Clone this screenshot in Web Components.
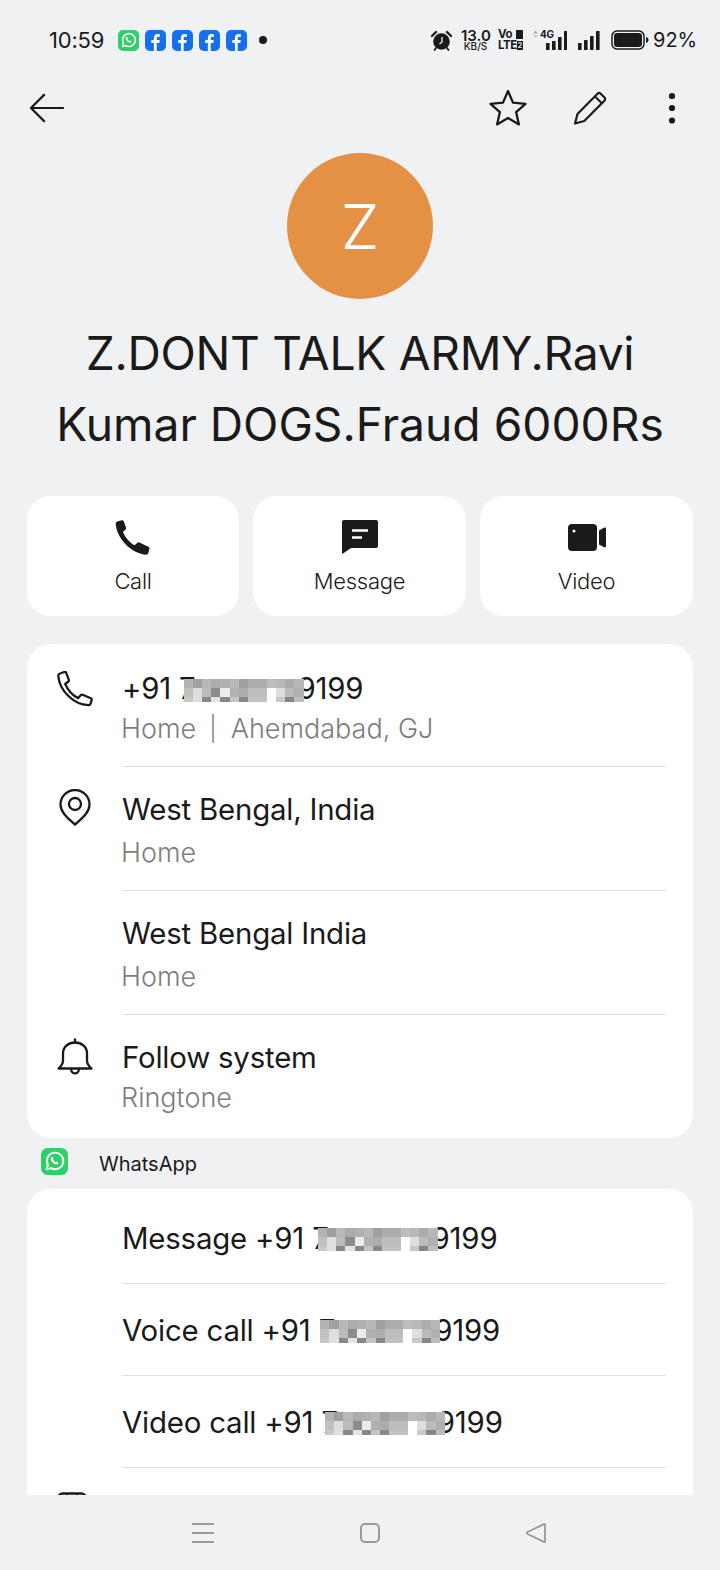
<!DOCTYPE html>
<html>
<head>
<meta charset="utf-8">
<title>Contact</title>
<style>
    html, body { margin: 0; padding: 0; background: #f0f1f3; }
    body { font-family: Inter, "Noto Sans", sans-serif; color: #1a1a1a; }
</style>
</head>
<body>
<contact-screen>
    <status-bar></status-bar>
    <contact-toolbar></contact-toolbar>
    <contact-scroll>
        <contact-header letter="Z"><span style="letter-spacing:-.3px">Z.DONT TALK ARMY.Ravi</span><br>Kumar DOGS.Fraud 6000Rs</contact-header>
        <action-row></action-row>
        <info-card>
            <info-row icon="phone" icon-top="27" height="123" sub="Home<span style='margin:0 14px 0 13px;font-size:24px;position:relative;top:-1px'>|</span>Ahemdabad, GJ" pad="23" gap="14"><span>+91 7</span><pixel-block style="margin-left:-12px;margin-right:-6px"></pixel-block><span>9199</span></info-row>
            <info-row icon="pin" icon-top="22" sub="Home" pad="21" gap="17">West Bengal, India</info-row>
            <info-row sub="Home" pad="21" gap="17">West Bengal India</info-row>
            <info-row icon="bell" icon-top="23" height="123" sub="Ringtone" pad="21" gap="14" last>Follow system</info-row>
        </info-card>
        <app-label>WhatsApp</app-label>
        <info-card>
            <action-line first>Message +91 <span>7</span><pixel-block style="margin-left:-11px;margin-right:-6px"></pixel-block><span>9199</span></action-line>
            <action-line>Voice call +91 <span>7</span><pixel-block style="margin-left:-15px;margin-right:-6px"></pixel-block><span>9199</span></action-line>
            <action-line>Video call +91 <span>7</span><pixel-block style="margin-left:-13px;margin-right:-8px"></pixel-block><span>9199</span></action-line>
            <action-line cut></action-line>
        </info-card>
    </contact-scroll>
    <nav-bar></nav-bar>
</contact-screen>

<script>
const ICONS = {
    whatsapp: `<svg viewBox="0 0 21 21" width="21" height="21"><rect width="21" height="21" rx="5" fill="#2fd06a"/><path d="M4.400 16.600l1-3.400a6.400 6.400 0 1 1 2.400 2.400z" fill="none" stroke="#fff" stroke-width="1.500" stroke-linejoin="round"/><path d="M8.200 7.200c.4-.4 1-.4 1.200.1l.4.9-.5.7c.5 1 1.200 1.700 2.200 2.200l.7-.6 1 .5c.4.200.4.800 0 1.200-.7.700-1.700.600-2.900 0-1-.6-1.800-1.400-2.300-2.500-.5-1-.5-1.900.2-2.500z" fill="#fff"/></svg>`,
    facebook: `<svg viewBox="0 0 21 21" width="21" height="21"><rect width="21" height="21" rx="5" fill="#1570f0"/><path d="M11.700 21v-8h2.600l.4-3h-3V8.400c0-.9.300-1.400 1.500-1.400h1.600V4.300c-.5-.1-1.300-.2-2.200-.2-2.300 0-3.700 1.300-3.700 3.800V10H6.300v3h2.600v8z" fill="#fff"/></svg>`,
    alarm: `<svg viewBox="0 0 21 21" width="21" height="21"><circle cx="10.500" cy="11.500" r="8.300" fill="#1a1a1a"/><path d="M1 6l4-4M20 6l-4-4" stroke="#1a1a1a" stroke-width="2.400" stroke-linecap="round"/><path d="M5 18l-1.500 2M16 18l1.500 2" stroke="#1a1a1a" stroke-width="1.800" stroke-linecap="round"/><path d="M11 7v5l-2.500 2" fill="none" stroke="#f0f1f3" stroke-width="1.300"/></svg>`,
    back: `<svg viewBox="0 0 36 30" width="35" height="30"><path d="M35 15H2M15.500 1.500L2 15l13.500 13.500" fill="none" stroke="#1a1a1a" stroke-width="2.300" stroke-linecap="round" stroke-linejoin="round"/></svg>`,
    star: `<svg viewBox="0 0 38 38" width="38" height="38"><path d="M19 2l5 11.600 12.500 1.200-9.400 8.300 2.800 12.300L19 29l-10.900 6.400 2.800-12.300-9.400-8.300L14 13.600z" fill="none" stroke="#1a1a1a" stroke-width="2.300" stroke-linejoin="round"/></svg>`,
    pencil: `<svg viewBox="0 0 34 34" width="34" height="34"><path d="M2 32.500l2.500-9.500L24.500 2.800c1-1 2.300-1 3.200-.1l3.800 3.800c.9.900.9 2.200-.1 3.200L11.300 30z" fill="none" stroke="#1a1a1a" stroke-width="2.200" stroke-linejoin="round"/><path d="M22 5.500l6.800 6.800" fill="none" stroke="#1a1a1a" stroke-width="2"/></svg>`,
    more: `<svg viewBox="0 0 8 32" width="8" height="32"><circle cx="4" cy="4" r="3.100" fill="#1a1a1a"/><circle cx="4" cy="16" r="3.100" fill="#1a1a1a"/><circle cx="4" cy="28.500" r="3.100" fill="#1a1a1a"/></svg>`,
    callFill: `<svg viewBox="0 0 36 35" width="36" height="35"><path d="M3 1.200l3.700-1c1-.2 1.700.2 2 1.100l2.300 6.200c.3.800.1 1.400-.5 2L8 12c1.800 5 6.700 10.800 11.500 13.300l3-2.500c.7-.6 1.300-.7 2-.3l8.800 4.300c1 .5 1.300 1.100 1.100 2l-1 4c-.3 1.300-1.300 2-2.600 1.900C15.500 33.500 1.800 18 0.700 4.100.6 2.600 1.500 1.600 3 1.200z" fill="#1a1a1a"/></svg>`,
    msgFill: `<svg viewBox="0 0 36 34" width="36" height="34"><path d="M2 0h32c1.200 0 2 .8 2 2v24c0 1.200-.8 2-2 2H9l-8 5.600c-.5.300-1 0-1-.5V2C0 .8.800 0 2 0z" fill="#1a1a1a"/><path d="M10 10.500h16M10 17.500h10" stroke="#fff" stroke-width="2.600" stroke-linecap="butt"/></svg>`,
    videoFill: `<svg viewBox="0 0 38 27" width="38" height="27"><rect width="29" height="27" rx="4" fill="#1a1a1a"/><circle cx="6" cy="7" r="1.500" fill="#fff"/><path d="M31 6.500l5-2.800c.8-.4 2 0 2 1v17.600c0 1-1.200 1.400-2 1l-5-2.800z" fill="#1a1a1a"/></svg>`,
    phone: `<svg viewBox="0 0 36 36" width="36" height="36"><path d="M3 2.500L7.400 1c.8-.3 1.500 0 1.800.8l2.700 7c.2.700 0 1.300-.5 1.700l-3.200 2.500c2.300 5.400 7.500 11.500 13 14.100l2.700-3c.5-.5 1.100-.7 1.800-.4l8 3.500c.8.300 1.100 1 .9 1.800l-1 3.600c-.3 1.100-1.200 1.700-2.300 1.600C16.400 33.500 2.500 19.500 1.300 5c-.1-1.200.6-2.100 1.700-2.500z" fill="none" stroke="#1a1a1a" stroke-width="2.300" stroke-linejoin="round"/></svg>`,
    pin: `<svg viewBox="-2 0 36 37" width="36" height="37"><path d="M16 35.500C7 28 1.500 22.500 1.500 15.500a14.500 14.500 0 0 1 29 0C30.500 22.500 25 28 16 35.500z" fill="none" stroke="#1a1a1a" stroke-width="2.300" stroke-linejoin="round"/><circle cx="16" cy="15" r="6" fill="none" stroke="#1a1a1a" stroke-width="2.300"/></svg>`,
    bell: `<svg viewBox="0 0 36 37" width="36" height="37"><path d="M1.500 30.500c2.400-2.200 4.500-4 4.500-8v-7c0-6.500 5-11 12-11s12 4.500 12 11v7c0 4 2.100 5.800 4.500 8z" fill="none" stroke="#1a1a1a" stroke-width="2.300" stroke-linejoin="round"/><path d="M18 4.500V1.500" stroke="#1a1a1a" stroke-width="2.300" stroke-linecap="round"/><path d="M14 30.500c0 6.500 8 6.500 8 0" fill="none" stroke="#1a1a1a" stroke-width="2.300"/></svg>`,
    calendar: `<svg viewBox="0 0 30 30" width="30" height="30"><rect x="1.500" y="1.500" width="27" height="27" rx="4" fill="none" stroke="#1a1a1a" stroke-width="2.400"/><path d="M1.500 8h27M10 1.500V8M20 1.500V8" stroke="#1a1a1a" stroke-width="2"/></svg>`
};

class ContactScreen extends HTMLElement {
    constructor() {
        super();
        this.attachShadow({ mode: 'open' }).innerHTML = `
            <style>
                :host { display: flex; flex-direction: column; width: 720px; height: 1570px; overflow: hidden; background: #f0f1f3; }
            </style>
            <slot></slot>`;
    }
}

class StatusBar extends HTMLElement {
    constructor() {
        super();
        const bars = (x, h) => h.map((v, i) => `<rect x="${x + i * 6}" y="${20 - v}" width="3.600" height="${v}" rx=".6" fill="#1a1a1a"/>`).join('');
        this.attachShadow({ mode: 'open' }).innerHTML = `
            <style>
                :host { display: flex; align-items: center; height: 80px; padding: 0 25px 0 49px; font-size: 22px; color: #1a1a1a; }
                .time { width: 69px; letter-spacing: -.2px; }
                .apps { display: flex; gap: 6px; align-items: center; }
                .dot { width: 8px; height: 8px; border-radius: 50%; background: #1a1a1a; margin-left: 6px; }
                .right { margin-left: auto; display: flex; align-items: center; }
                svg { display: block; }
                .speed { margin-left: 9px; width: 29px; display: block; white-space: pre; text-align: center; font-size: 10px; font-weight: 500; line-height: 9px; }
                .speed::first-line { font-size: 15px; font-weight: 600; line-height: 13px; }
                .volte { margin-left: 8px; width: 25px; display: flex; flex-direction: column; font-weight: 700; }
                .volte div { display: flex; justify-content: space-between; align-items: center; height: 11px; line-height: 11px; }
                .volte span { font-size: 11.500px; letter-spacing: -.4px; }
                .volte em { display: block; width: 7px; height: 9px; background: #1a1a1a; color: #f0f1f3; font: 700 7px/9px Inter, sans-serif; text-align: center; }
                .net { margin-left: 10px; position: relative; width: 34px; height: 20px; }
                .net span { position: absolute; left: 7px; top: -1px; font-size: 10px; line-height: 11px; font-weight: 700; letter-spacing: -.3px; }
                .pct { margin-left: 4px; font-size: 20px; width: 42px; white-space: nowrap; }
            </style>
            <div class="time">10:59</div>
            <div class="apps">${ICONS.whatsapp}${ICONS.facebook}${ICONS.facebook}${ICONS.facebook}${ICONS.facebook}<div class="dot"></div></div>
            <div class="right">
                ${ICONS.alarm}
                <div class="speed">13.0
KB/S</div>
                <div class="volte"><div><span>Vo</span><em></em></div><div><span>LTE</span><em>2</em></div></div>
                <div class="net"><svg viewBox="0 0 34 20" width="34" height="20"><path d="M0 3.500L2.500 .5 5 3.500z" fill="#a8a8a8"/><path d="M0 5L2.500 8 5 5z" fill="#cfcfcf"/>${bars(13, [7, 9, 13, 19])}</svg><span>4G</span></div>
                <svg style="margin-left:11px" viewBox="0 0 22 20" width="22" height="20">${bars(0, [7, 10, 14, 19])}</svg>
                <svg style="margin-left:11px" viewBox="0 0 38 20" width="38" height="20"><rect x="1" y="1" width="32" height="18" rx="5" fill="none" stroke="#1a1a1a" stroke-width="1.500"/><rect x="3" y="3" width="28" height="14" rx="3" fill="#1a1a1a"/><path d="M35 7c1.500.3 2.500 1.500 2.500 3s-1 2.700-2.500 3z" fill="#1a1a1a"/></svg>
                <div class="pct">92%</div>
            </div>`;
    }
}

class ContactToolbar extends HTMLElement {
    constructor() {
        super();
        this.attachShadow({ mode: 'open' }).innerHTML = `
            <style>
                :host { display: flex; align-items: center; height: 55px; padding: 0 44px 0 29px; }
                svg { display: block; }
                .end { margin-left: auto; display: flex; align-items: center; }
                .end svg:nth-child(2) { margin-left: 46px; }
                .end svg:nth-child(3) { margin-left: 61px; }
            </style>
            ${ICONS.back}
            <div class="end">${ICONS.star}${ICONS.pencil}${ICONS.more}</div>`;
    }
}

class ContactScroll extends HTMLElement {
    constructor() {
        super();
        this.attachShadow({ mode: 'open' }).innerHTML = `
            <style>
                :host { display: block; flex: 1; min-height: 0; overflow: hidden; padding: 0 27px; }
            </style>
            <slot></slot>`;
    }
}

class ContactHeader extends HTMLElement {
    constructor() {
        super();
        this.attachShadow({ mode: 'open' }).innerHTML = `
            <style>
                :host { display: flex; flex-direction: column; align-items: center; padding-top: 18px; }
                .avatar { width: 146px; height: 146px; border-radius: 50%; background: #e59145; color: #fff; font-size: 62px; font-weight: 300; display: flex; align-items: center; justify-content: center; }
                h1 { margin: 19px 0 0; font-size: 46.200px; font-weight: 400; line-height: 71px; text-align: center; color: #1a1a1a; white-space: nowrap; }
            </style>
            <div class="avatar">${this.getAttribute('letter')}</div>
            <h1><slot></slot></h1>`;
    }
}

class ActionRow extends HTMLElement {
    constructor() {
        super();
        const items = [['callFill', 'Call'], ['msgFill', 'Message'], ['videoFill', 'Video']];
        this.attachShadow({ mode: 'open' }).innerHTML = `
            <style>
                :host { display: grid; grid-template-columns: 212px 213px 1fr; gap: 14px; margin-top: 36px; }
                .btn { height: 120px; background: #fff; border-radius: 24px; display: flex; flex-direction: column; align-items: center; }
                .icon { height: 36px; margin-top: 23px; display: flex; align-items: center; }
                svg { display: block; }
                .label { margin-top: 12px; font-size: 22px; letter-spacing: -.3px; font-weight: 300; line-height: 28px; color: #1a1a1a; }
            </style>
            ${items.map(([ic, t]) => `<div class="btn"><div class="icon">${ICONS[ic]}</div><div class="label">${t}</div></div>`).join('')}`;
    }
}

class InfoCard extends HTMLElement {
    constructor() {
        super();
        this.attachShadow({ mode: 'open' }).innerHTML = `
            <style>
                :host { display: block; background: #fff; border-radius: 24px; margin-top: 28px; padding: 0 27px 0 30px; }
                :host(:nth-of-type(2)) { margin-top: 0; }
            </style>
            <slot></slot>`;
    }
}

class InfoRow extends HTMLElement {
    constructor() {
        super();
        const icon = this.getAttribute('icon');
        const pad = this.getAttribute('pad') || 22;
        const gap = this.getAttribute('gap') || 12;
        const top = this.getAttribute('icon-top') || 0;
        const height = this.getAttribute('height') || 124;
        this.attachShadow({ mode: 'open' }).innerHTML = `
            <style>
                :host { display: flex; }
                .ic { width: 65px; flex: none; padding-top: ${top}px; }
                .ic svg { display: block; }
                .main { flex: 1; padding: ${pad}px 0 0; height: ${height}px; box-sizing: border-box; border-bottom: ${this.hasAttribute('last') ? 0 : '1px solid #dedfe1'}; }
                .title { font-size: 29.400px; line-height: 44px; display: flex; align-items: center; white-space: pre; font-weight: 400; letter-spacing: -.2px; color: #1a1a1a; }
                .sub { margin-top: ${gap - 12}px; margin-left: -1px; font-size: 27px; line-height: 32px; font-weight: 300; color: #7d7d7d; white-space: nowrap; }
            </style>
            <div class="ic">${icon ? ICONS[icon] : ''}</div>
            <div class="main"><div class="title"><slot></slot></div><div class="sub">${this.getAttribute('sub')}</div></div>`;
    }
}

class AppLabel extends HTMLElement {
    constructor() {
        super();
        this.attachShadow({ mode: 'open' }).innerHTML = `
            <style>
                :host { display: flex; align-items: center; height: 51px; padding-left: 14px; }
                svg { display: block; margin-top: -4px; }
                span { margin-left: 31px; font-size: 20px; color: #1a1a1a; font-weight: 400; }
            </style>
            <svg viewBox="0 0 21 21" width="27" height="27">${ICONS.whatsapp.replace(/<\/?svg[^>]*>/g, '')}</svg>
            <span>WhatsApp</span>`;
    }
}

class ActionLine extends HTMLElement {
    constructor() {
        super();
        const cut = this.hasAttribute('cut');
        const first = this.hasAttribute('first');
        const h = cut ? 60 : first ? 95 : 92;
        this.attachShadow({ mode: 'open' }).innerHTML = `
            <style>
                :host { display: flex; }
                .ic { width: 65px; flex: none; padding-top: 24px; }
                .main { flex: 1; height: ${h}px; box-sizing: border-box; display: flex; align-items: center; font-size: 29.400px; letter-spacing: -.2px; white-space: pre; color: #1a1a1a; border-bottom: ${cut ? 0 : '1px solid #dedfe1'}; padding-top: ${first ? 4 : 1}px; }
                svg { display: block; }
            </style>
            <div class="ic">${cut ? ICONS.calendar : ''}</div>
            <div class="main"><slot></slot></div>`;
    }
}

class PixelBlock extends HTMLElement {
    constructor() {
        super();
        // redaction mosaic, 13 x 3 cells, bottom row cut short
        const rows = [
            ['b4', 'a0', 'b8', 'ac', 'b0', 'b8', 'a0', 'ac', 'ac', 'bd', 'b8', 'ac', 'b8'],
            ['c0', 'de', 'bb', '8c', 'ec', 'b0', 'ac', 'bd', 'bd', 'ff', 'de', 'bb', 'b0'],
            ['c8', 'e0', '88', 'e4', '88', 'c4', '88', 'c2', 'c2', 'ff', 'c8', '86', 'bd']
        ];
        const cells = rows.flat().map(c => `<i style="background:#${c}${c}${c}"></i>`).join('');
        this.attachShadow({ mode: 'open' }).innerHTML = `
            <style>
                :host { display: grid; position: relative; flex: none; width: 120px; height: 23px; margin-top: 2px; grid-template-columns: repeat(13, 1fr); grid-template-rows: 9px 9px 5px; }
            </style>
            ${cells}`;
    }
}

class NavBar extends HTMLElement {
    constructor() {
        super();
        this.attachShadow({ mode: 'open' }).innerHTML = `
            <style>
                :host { display: flex; flex: none; height: 75px; align-items: flex-start; padding-top: 28px; box-sizing: border-box; padding-left: 192px; background: #f0f1f3; }
                svg { display: block; }
                svg + svg { margin-left: 146px; }
                svg:last-child { margin-left: 143px; }
            </style>
            <svg viewBox="0 0 22 20" width="22" height="20"><path d="M0 1h22M0 10h22M0 19h22" stroke="#9a9a9a" stroke-width="2"/></svg>
            <svg viewBox="0 0 22 20" width="22" height="20"><rect x="1" y="1" width="18" height="18" rx="4" fill="none" stroke="#9a9a9a" stroke-width="2"/></svg>
            <svg viewBox="0 0 22 20" width="22" height="20"><path d="M20 1.500v17c0 .7-.4.8-1 .4L2.500 11c-.7-.5-.7-1.500 0-2L19 1.100c.6-.4 1-.3 1 .4z" fill="none" stroke="#9a9a9a" stroke-width="1.800" stroke-linejoin="round"/></svg>`;
    }
}

customElements.define('contact-screen', ContactScreen);
customElements.define('status-bar', StatusBar);
customElements.define('contact-toolbar', ContactToolbar);
customElements.define('contact-scroll', ContactScroll);
customElements.define('contact-header', ContactHeader);
customElements.define('action-row', ActionRow);
customElements.define('info-card', InfoCard);
customElements.define('info-row', InfoRow);
customElements.define('app-label', AppLabel);
customElements.define('action-line', ActionLine);
customElements.define('pixel-block', PixelBlock);
customElements.define('nav-bar', NavBar);
</script>
</body>
</html>
